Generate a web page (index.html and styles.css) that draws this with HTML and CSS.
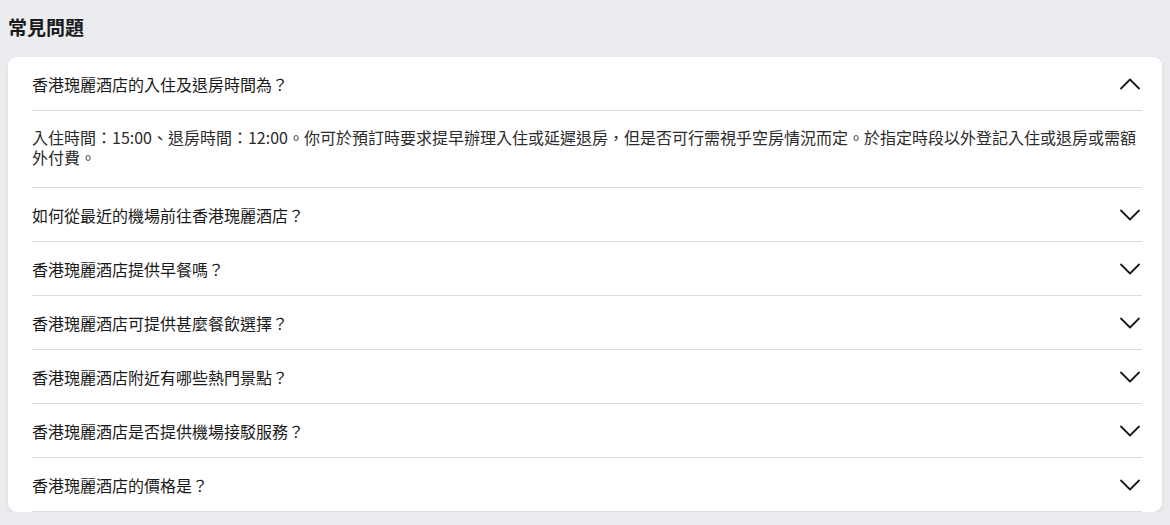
FILE: index.html
```html
<!DOCTYPE html>
<html lang="zh-Hant">
<head>
<meta charset="utf-8">
<title>常見問題</title>
<link rel="stylesheet" href="styles.css">
</head>
<body>
<div class="page">
  <h2 class="title">常見問題</h2>
  <div class="card">
    <div class="item open">
      <div class="q">
        <span>香港瑰麗酒店的入住及退房時間為？</span>
        <svg class="chev" viewBox="0 0 24 24"><polyline points="3,16.5 12,7.5 21,16.5"/></svg>
      </div>
      <div class="a">入住時間：15:00、退房時間：12:00。你可於預訂時要求提早辦理入住或延遲退房，但是否可行需視乎空房情況而定。於指定時段以外登記入住或退房或需額外付費。</div>
    </div>
    <div class="item">
      <div class="q">
        <span>如何從最近的機場前往香港瑰麗酒店？</span>
        <svg class="chev" viewBox="0 0 24 24"><polyline points="3,7.5 12,16.5 21,7.5"/></svg>
      </div>
    </div>
    <div class="item">
      <div class="q">
        <span>香港瑰麗酒店提供早餐嗎？</span>
        <svg class="chev" viewBox="0 0 24 24"><polyline points="3,7.5 12,16.5 21,7.5"/></svg>
      </div>
    </div>
    <div class="item">
      <div class="q">
        <span>香港瑰麗酒店可提供甚麼餐飲選擇？</span>
        <svg class="chev" viewBox="0 0 24 24"><polyline points="3,7.5 12,16.5 21,7.5"/></svg>
      </div>
    </div>
    <div class="item">
      <div class="q">
        <span>香港瑰麗酒店附近有哪些熱門景點？</span>
        <svg class="chev" viewBox="0 0 24 24"><polyline points="3,7.5 12,16.5 21,7.5"/></svg>
      </div>
    </div>
    <div class="item">
      <div class="q">
        <span>香港瑰麗酒店是否提供機場接駁服務？</span>
        <svg class="chev" viewBox="0 0 24 24"><polyline points="3,7.5 12,16.5 21,7.5"/></svg>
      </div>
    </div>
    <div class="item">
      <div class="q">
        <span>香港瑰麗酒店的價格是？</span>
        <svg class="chev" viewBox="0 0 24 24"><polyline points="3,7.5 12,16.5 21,7.5"/></svg>
      </div>
    </div>
  </div>
</div>
</body>
</html>
```

FILE: styles.css
```css
html, body {
  margin: 0;
  padding: 0;
  background: #ebecf0;
}
body {
  font-family: "Noto Sans CJK TC", "Noto Sans", sans-serif;
  color: #1a1a1a;
}
.page {
  padding: 0 8px;
}
.title {
  margin: 0;
  padding-top: 12px;
  line-height: 30px;
  font-size: 19px;
  font-weight: 700;
  color: #1a1a1a;
  margin-bottom: 15px;
}
.card {
  background: #ffffff;
  border-radius: 9px;
  padding: 0 20px 0 24px;
  box-shadow: 0 2px 4px rgba(0, 0, 0, 0.08);
}
.item {
  border-bottom: 1px solid #d9dadf;
}
.q {
  height: 53px;
  display: flex;
  align-items: center;
  justify-content: space-between;
  font-size: 16px;
  color: #1a1a1a;
}
.chev {
  width: 24px;
  height: 24px;
  fill: none;
  stroke: #1a1a1a;
  stroke-width: 1.8;
  stroke-linecap: round;
  stroke-linejoin: round;
}
.a {
  border-top: 1px solid #d9dadf;
  padding: 16px 0 20px;
  font-size: 16px;
  line-height: 20px;
  color: #2b2b2b;
}
```
